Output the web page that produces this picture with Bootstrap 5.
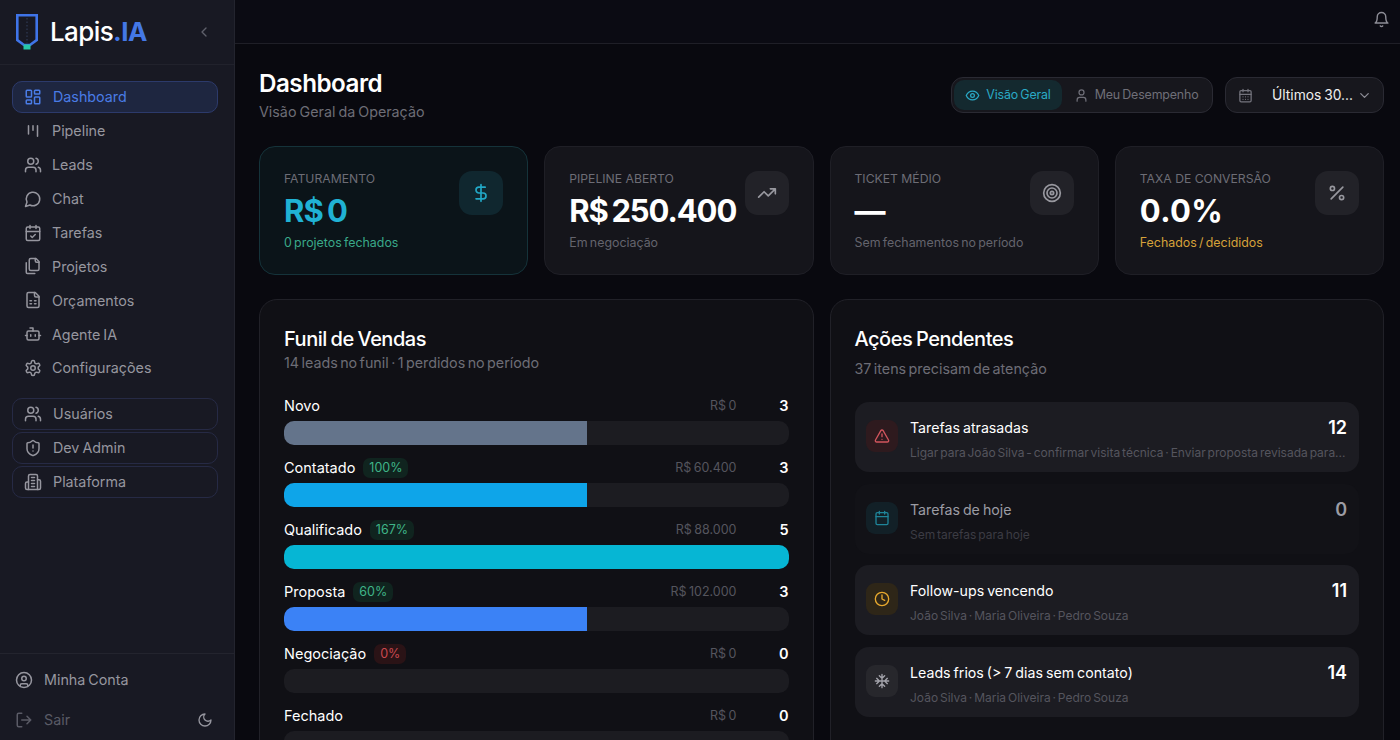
<!DOCTYPE html>
<html lang="pt-BR">
<head>
  <meta charset="UTF-8">
  <title>Lapis.IA - Dashboard</title>
  <link href="https://cdn.jsdelivr.net/npm/bootstrap@5.3.0/dist/css/bootstrap.min.css" rel="stylesheet">
  <style>
    html, body { height: 100%; }
    body { background: #09090f; color: #fff; font-family: "Inter", "Noto Sans", sans-serif; overflow: hidden; word-spacing: -1px; }
    svg.ico { width: 18px; height: 18px; fill: none; stroke: currentColor; stroke-width: 2; stroke-linecap: round; stroke-linejoin: round; flex: none; }
    .app-shell { height: 740px; }

    /* sidebar */
    .side { width: 235px; background: #181923; border-right: 1px solid #23242e; flex: none; }
    .side-logo { height: 65px; padding: 0 16px; border-bottom: 1px solid #21222c; }
    .logo-mark { width: 22px; height: 36px; flex: none; }
    .logo-text { font-size: 26px; font-weight: 500; letter-spacing: -.6px; line-height: 1; margin-left: 12px; }
    .logo-text b { color: #4478e6; font-weight: 700; }
    .side-collapse { width: 16px !important; height: 16px !important; color: #5f606b; margin-left: auto; margin-right: 6px; }
    .side-nav { padding: 16px 16px 0 12px; }
    .nav-entry { height: 32px; padding: 0 12px; gap: 10px; color: #96969f; font-size: 14.3px; text-decoration: none; border-radius: 10px; margin-bottom: 1.9px; }
    .nav-entry.active-entry { background: #1e2640; border: 1px solid #2c3a6b; color: #4a7ce6; padding: 0 11px; gap: 11px; }
    .nav-entry.framed { border: 1px solid #262a45; padding: 0 11px; gap: 11px; }
    .nav-gap { height: 12px; }
    .side-foot { border-top: 1px solid #23242e; padding: 6px 15px 0; height: 87px; }
    .foot-entry { height: 40px; gap: 11px; color: #96969f; font-size: 14.3px; }
    .foot-entry.dim { color: #5a5b66; }
    .moon-ico { width: 16px !important; height: 16px !important; color: #96969f; margin-left: auto; margin-right: 6px; }

    /* top */
    .top-strip { height: 44px; background: #0b0b13; border-bottom: 1px solid #1f1f27; padding: 0 10px 5px 0; color: #8d8d96; }
    .top-strip svg.ico { width: 17px; height: 17px; }
    .page-body { padding: 24px 16px 0 24px; min-width: 0; }
    .page-head { margin-bottom: 22px; }
    .page-title { font-size: 24.2px; font-weight: 600; letter-spacing: -.5px; line-height: 32px; margin: 0; }
    .page-sub { font-size: 14.3px; color: #6d6d76; line-height: 24px; }
    .head-tools { gap: 12px; margin-top: 9px; }
    .seg-box { height: 36px; background: #17171d; border: 1px solid #2a2a33; border-radius: 12px; padding: 2px; font-size: 12.4px; letter-spacing: -.15px; }
    .seg-item { height: 30px; padding: 0 11.5px; gap: 6px; border-radius: 10px; color: #6f6f78; }
    .seg-item.on { background: #14292f; color: #2aa9c6; }
    .seg-item svg.ico { width: 15px; height: 15px; }
    .range-box { height: 36px; width: 159px; background: #17171d; border: 1px solid #2a2a33; border-radius: 12px; padding: 0 11px 0 12px; font-size: 13.8px; color: #eee; }
    .range-box svg.ico { width: 15px; height: 15px; }
    .range-cal { color: #74747d; }
    .range-down { color: #8d8d96; }

    /* stat cards */
    .stat-card { --bs-card-bg: #15151b; --bs-card-border-color: #1f1f26; --bs-card-border-radius: 16px; --bs-card-inner-border-radius: 15px; height: 129px; }
    .stat-card.teal { --bs-card-bg: #0b1419; --bs-card-border-color: #15333a; }
    .stat-inner { padding: 22px 24px 0; position: relative; }
    .stat-label { font-size: 12.2px; color: #6d6d76; line-height: 20px; word-spacing: 0; }
    .stat-val { font-size: 31px; font-weight: 700; line-height: 42px; letter-spacing: -1.1px; word-spacing: -2.5px; margin-top: 1px; white-space: nowrap; }
    .stat-val.cyan { color: #20b2d4; letter-spacing: -.8px; }
    .stat-val.pct-val { letter-spacing: .4px; }
    .stat-sub { font-size: 12.4px; color: #64646d; line-height: 20px; margin-top: 1px; word-spacing: -1.2px; }
    .stat-sub.good { color: #3aa98a; }
    .stat-sub.warn { color: #d6a23a; }
    .stat-ico { position: absolute; top: 24px; right: 24px; width: 44px; height: 44px; border-radius: 13px; background: #222228; color: #98989f; }
    .teal .stat-ico { background: #10272f; color: #22a8c6; }
    .stat-ico svg.ico { width: 20px; height: 20px; }

    /* panels */
    .panel-card { --bs-card-bg: #101015; --bs-card-border-color: #212128; --bs-card-border-radius: 18px; height: 480px; padding: 25px 24px 0; }
    .panel-title { font-size: 20px; font-weight: 500; letter-spacing: -.5px; line-height: 28px; margin: 0; }
    .panel-sub { font-size: 14.3px; color: #6d6d76; line-height: 20px; word-spacing: -1.6px; }
    .panel-sub.spaced { margin-top: 6px; }
    .funnel-intro { margin-bottom: 21px; }

    /* funnel */
    .fun-head { height: 24px; margin-bottom: 3px; font-size: 14.5px; flex: none; }
    .pct-tag { font-size: 12.5px; font-weight: 400; padding: 0 6px; line-height: 20px; border-radius: 7px; margin-left: 8px; background: #10241f; color: #3fb488; }
    .pct-tag.bad { background: #2a1316; color: #c9484f; }
    .fun-money { margin-left: auto; width: 120px; text-align: right; font-size: 12.5px; color: #55555e; }
    .fun-count { width: 52px; text-align: right; font-weight: 600; }
    .fun-track { --bs-progress-height: 24px; --bs-progress-bg: #1c1c21; --bs-progress-border-radius: 10px; margin-bottom: 11px; flex: none; }

    /* actions */
    .act-list { margin-top: 23px; gap: 11.7px; }
    .act-row { background: #1c1c22; border-radius: 14px; padding: 14px 12px 11px 11.5px; gap: 12px; }
    .act-row.idle { background: #121217; }
    .act-ico { width: 32px; height: 32px; border-radius: 9px; margin-top: 4px; flex: none; background: #27272c; color: #a3a3ab; }
    .act-ico svg.ico { width: 16px; height: 16px; }
    .act-ico.red { background: #2e1a1e; color: #d1555d; }
    .act-ico.blue { background: #122027; color: #1f8499; }
    .act-ico.amber { background: #2e2618; color: #e8a92e; }
    .act-title { font-size: 14.2px; line-height: 24px; margin-bottom: 4px; }
    .act-title.muted-title { color: #9c9ca4; }
    .act-num { font-size: 18px; font-weight: 600; }
    .act-num.muted-title { color: #9c9ca4; }
    .act-note { font-size: 12px; color: #55555e; line-height: 17px; word-spacing: -1.5px; white-space: nowrap; }
    .act-note.faint { color: #3c3c44; }
  </style>
</head>
<body>
  <!-- icons -->
  <svg width="0" height="0" class="position-absolute">
    <symbol id="i-dash" viewBox="0 0 24 24"><rect x="3" y="3" width="7" height="9" rx="1"/><rect x="14" y="3" width="7" height="5" rx="1"/><rect x="14" y="12" width="7" height="9" rx="1"/><rect x="3" y="16" width="7" height="5" rx="1"/></symbol>
    <symbol id="i-kanban" viewBox="0 0 24 24"><path d="M6 5v11M12 5v6M18 5v14"/></symbol>
    <symbol id="i-users" viewBox="0 0 24 24"><path d="M16 21v-2a4 4 0 0 0-4-4H6a4 4 0 0 0-4 4v2"/><circle cx="9" cy="7" r="4"/><path d="M22 21v-2a4 4 0 0 0-3-3.87M16 3.13a4 4 0 0 1 0 7.75"/></symbol>
    <symbol id="i-chat" viewBox="0 0 24 24"><path d="M7.9 20A9 9 0 1 0 4 16.1L2 22Z"/></symbol>
    <symbol id="i-calcheck" viewBox="0 0 24 24"><path d="M8 2v4M16 2v4"/><rect x="3" y="4" width="18" height="18" rx="2"/><path d="M3 10h18M9 16l2 2 4-4"/></symbol>
    <symbol id="i-files" viewBox="0 0 24 24"><path d="M20 7h-3a2 2 0 0 1-2-2V2"/><path d="M9 18a2 2 0 0 1-2-2V4a2 2 0 0 1 2-2h7l4 4v10a2 2 0 0 1-2 2Z"/><path d="M3 7.6v12.8A1.6 1.6 0 0 0 4.6 22h9.8"/></symbol>
    <symbol id="i-sheet" viewBox="0 0 24 24"><path d="M15 2H6a2 2 0 0 0-2 2v16a2 2 0 0 0 2 2h12a2 2 0 0 0 2-2V7Z"/><path d="M14 2v4a2 2 0 0 0 2 2h4M8 13h2M14 13h2M8 17h2M14 17h2"/></symbol>
    <symbol id="i-bot" viewBox="0 0 24 24"><path d="M12 8V4H8"/><rect x="4" y="8" width="16" height="12" rx="2"/><path d="M2 14h2M20 14h2M15 13v2M9 13v2"/></symbol>
    <symbol id="i-gear" viewBox="0 0 24 24"><path d="M12.22 2h-.44a2 2 0 0 0-2 2v.18a2 2 0 0 1-1 1.73l-.43.25a2 2 0 0 1-2 0l-.15-.08a2 2 0 0 0-2.73.73l-.22.38a2 2 0 0 0 .73 2.73l.15.1a2 2 0 0 1 1 1.72v.51a2 2 0 0 1-1 1.74l-.15.09a2 2 0 0 0-.73 2.73l.22.38a2 2 0 0 0 2.73.73l.15-.08a2 2 0 0 1 2 0l.43.25a2 2 0 0 1 1 1.73V20a2 2 0 0 0 2 2h.44a2 2 0 0 0 2-2v-.18a2 2 0 0 1 1-1.73l.43-.25a2 2 0 0 1 2 0l.15.08a2 2 0 0 0 2.73-.73l.22-.39a2 2 0 0 0-.73-2.73l-.15-.08a2 2 0 0 1-1-1.74v-.5a2 2 0 0 1 1-1.74l.15-.09a2 2 0 0 0 .73-2.73l-.22-.38a2 2 0 0 0-2.73-.73l-.15.08a2 2 0 0 1-2 0l-.43-.25a2 2 0 0 1-1-1.73V4a2 2 0 0 0-2-2z"/><circle cx="12" cy="12" r="3"/></symbol>
    <symbol id="i-shield" viewBox="0 0 24 24"><path d="M20 13c0 5-3.5 7.5-7.66 8.95a1 1 0 0 1-.67-.01C7.5 20.5 4 18 4 13V6a1 1 0 0 1 1-1c2 0 4.5-1.2 6.24-2.72a1.17 1.17 0 0 1 1.52 0C14.51 3.81 17 5 19 5a1 1 0 0 1 1 1z"/><path d="M12 8v4M12 16h.01"/></symbol>
    <symbol id="i-build" viewBox="0 0 24 24"><path d="M6 22V4a2 2 0 0 1 2-2h8a2 2 0 0 1 2 2v18Z"/><path d="M6 12H4a2 2 0 0 0-2 2v6a2 2 0 0 0 2 2h2M18 9h2a2 2 0 0 1 2 2v9a2 2 0 0 1-2 2h-2M10 6h4M10 10h4M10 14h4M10 18h4"/></symbol>
    <symbol id="i-account" viewBox="0 0 24 24"><circle cx="12" cy="12" r="10"/><circle cx="12" cy="10" r="3"/><path d="M7 20.662V19a2 2 0 0 1 2-2h6a2 2 0 0 1 2 2v1.662"/></symbol>
    <symbol id="i-out" viewBox="0 0 24 24"><path d="M9 21H5a2 2 0 0 1-2-2V5a2 2 0 0 1 2-2h4M16 17l5-5-5-5M21 12H9"/></symbol>
    <symbol id="i-moon" viewBox="0 0 24 24"><path d="M12 3a6 6 0 0 0 9 9 9 9 0 1 1-9-9Z"/></symbol>
    <symbol id="i-bell" viewBox="0 0 24 24"><path d="M6 8a6 6 0 0 1 12 0c0 7 3 9 3 9H3s3-2 3-9M10.3 21a1.94 1.94 0 0 0 3.4 0"/></symbol>
    <symbol id="i-eye" viewBox="0 0 24 24"><path d="M2 12s3-7 10-7 10 7 10 7-3 7-10 7-10-7-10-7Z"/><circle cx="12" cy="12" r="3"/></symbol>
    <symbol id="i-user" viewBox="0 0 24 24"><path d="M19 21v-2a4 4 0 0 0-4-4H9a4 4 0 0 0-4 4v2"/><circle cx="12" cy="7" r="4"/></symbol>
    <symbol id="i-caldays" viewBox="0 0 24 24"><path d="M8 2v4M16 2v4"/><rect x="3" y="4" width="18" height="18" rx="2"/><path d="M3 10h18M8 14h.01M12 14h.01M16 14h.01M8 18h.01M12 18h.01M16 18h.01"/></symbol>
    <symbol id="i-cal" viewBox="0 0 24 24"><path d="M8 2v4M16 2v4"/><rect x="3" y="4" width="18" height="18" rx="2"/><path d="M3 10h18"/></symbol>
    <symbol id="i-down" viewBox="0 0 24 24"><path d="m6 9 6 6 6-6"/></symbol>
    <symbol id="i-left" viewBox="0 0 24 24"><path d="m15 18-6-6 6-6"/></symbol>
    <symbol id="i-dollar" viewBox="0 0 24 24"><path d="M12 2v20M17 5H9.5a3.5 3.5 0 0 0 0 7h5a3.5 3.5 0 0 1 0 7H6"/></symbol>
    <symbol id="i-trend" viewBox="0 0 24 24"><path d="M22 7l-8.5 8.5-5-5L2 17M16 7h6v6"/></symbol>
    <symbol id="i-target" viewBox="0 0 24 24"><circle cx="12" cy="12" r="10"/><circle cx="12" cy="12" r="6"/><circle cx="12" cy="12" r="2"/></symbol>
    <symbol id="i-pct" viewBox="0 0 24 24"><path d="M19 5 5 19"/><circle cx="6.5" cy="6.5" r="2.5"/><circle cx="17.5" cy="17.5" r="2.5"/></symbol>
    <symbol id="i-warn" viewBox="0 0 24 24"><path d="m21.73 18-8-14a2 2 0 0 0-3.48 0l-8 14A2 2 0 0 0 4 21h16a2 2 0 0 0 1.73-3M12 9v4M12 17h.01"/></symbol>
    <symbol id="i-clock" viewBox="0 0 24 24"><circle cx="12" cy="12" r="10"/><path d="M12 6v6l4 2"/></symbol>
    <symbol id="i-snow" viewBox="0 0 24 24"><path d="M2 12h20M12 2v20M20 16l-4-4 4-4M4 8l4 4-4 4M16 4l-4 4-4-4M8 20l4-4 4 4"/></symbol>
  </svg>

  <div class="app-shell d-flex">
    <!-- Sidebar -->
    <aside class="side d-flex flex-column">
      <div class="side-logo d-flex align-items-center">
        <svg class="logo-mark" viewBox="0 0 22 36" fill="none">
          <path d="M1.3 1.3h19.4V26L14 31H8L1.3 26Z" stroke="#3f74e8" stroke-width="2.6"/>
          <path d="M11 4v25" stroke="#33415f" stroke-width="1" stroke-dasharray="1.5 2"/>
          <rect x="7.5" y="30.5" width="7" height="5" fill="#27c7a8"/>
        </svg>
        <span class="logo-text">Lapis<b>.IA</b></span>
        <svg class="ico side-collapse"><use href="#i-left"/></svg>
      </div>

      <nav class="side-nav flex-grow-1">
        <a class="nav-entry active-entry d-flex align-items-center" href="#"><svg class="ico"><use href="#i-dash"/></svg>Dashboard</a>
        <a class="nav-entry d-flex align-items-center" href="#"><svg class="ico"><use href="#i-kanban"/></svg>Pipeline</a>
        <a class="nav-entry d-flex align-items-center" href="#"><svg class="ico"><use href="#i-users"/></svg>Leads</a>
        <a class="nav-entry d-flex align-items-center" href="#"><svg class="ico"><use href="#i-chat"/></svg>Chat</a>
        <a class="nav-entry d-flex align-items-center" href="#"><svg class="ico"><use href="#i-calcheck"/></svg>Tarefas</a>
        <a class="nav-entry d-flex align-items-center" href="#"><svg class="ico"><use href="#i-files"/></svg>Projetos</a>
        <a class="nav-entry d-flex align-items-center" href="#"><svg class="ico"><use href="#i-sheet"/></svg>Orçamentos</a>
        <a class="nav-entry d-flex align-items-center" href="#"><svg class="ico"><use href="#i-bot"/></svg>Agente IA</a>
        <a class="nav-entry d-flex align-items-center" href="#"><svg class="ico"><use href="#i-gear"/></svg>Configurações</a>
        <div class="nav-gap"></div>
        <a class="nav-entry framed d-flex align-items-center" href="#"><svg class="ico"><use href="#i-users"/></svg>Usuários</a>
        <a class="nav-entry framed d-flex align-items-center" href="#"><svg class="ico"><use href="#i-shield"/></svg>Dev Admin</a>
        <a class="nav-entry framed d-flex align-items-center" href="#"><svg class="ico"><use href="#i-build"/></svg>Plataforma</a>
      </nav>

      <div class="side-foot">
        <div class="foot-entry d-flex align-items-center"><svg class="ico"><use href="#i-account"/></svg>Minha Conta</div>
        <div class="foot-entry dim d-flex align-items-center"><svg class="ico"><use href="#i-out"/></svg>Sair<svg class="ico moon-ico"><use href="#i-moon"/></svg></div>
      </div>
    </aside>

    <div class="flex-grow-1 d-flex flex-column overflow-hidden">
      <div class="top-strip d-flex align-items-center justify-content-end flex-shrink-0">
        <svg class="ico"><use href="#i-bell"/></svg>
      </div>

      <main class="page-body">
        <!-- Header -->
        <div class="page-head d-flex justify-content-between align-items-start">
          <div>
            <h1 class="page-title">Dashboard</h1>
            <div class="page-sub">Visão Geral da Operação</div>
          </div>
          <div class="head-tools d-flex">
            <div class="seg-box d-flex">
              <div class="seg-item on d-flex align-items-center"><svg class="ico"><use href="#i-eye"/></svg>Visão Geral</div>
              <div class="seg-item d-flex align-items-center"><svg class="ico"><use href="#i-user"/></svg>Meu Desempenho</div>
            </div>
            <div class="range-box d-flex align-items-center">
              <svg class="ico range-cal"><use href="#i-caldays"/></svg>
              <span class="ms-auto me-1">Últimos 30...</span>
              <svg class="ico range-down"><use href="#i-down"/></svg>
            </div>
          </div>
        </div>

        <!-- Stats -->
        <div class="row row-cols-4 g-3 mb-4">
          <div class="col">
            <div class="card stat-card teal"><div class="stat-inner">
              <div class="stat-label">FATURAMENTO</div>
              <div class="stat-val cyan">R$ 0</div>
              <div class="stat-sub good">0 projetos fechados</div>
              <div class="stat-ico d-flex align-items-center justify-content-center"><svg class="ico"><use href="#i-dollar"/></svg></div>
            </div></div>
          </div>
          <div class="col">
            <div class="card stat-card"><div class="stat-inner">
              <div class="stat-label">PIPELINE ABERTO</div>
              <div class="stat-val">R$ 250.400</div>
              <div class="stat-sub">Em negociação</div>
              <div class="stat-ico d-flex align-items-center justify-content-center"><svg class="ico"><use href="#i-trend"/></svg></div>
            </div></div>
          </div>
          <div class="col">
            <div class="card stat-card"><div class="stat-inner">
              <div class="stat-label">TICKET MÉDIO</div>
              <div class="stat-val">—</div>
              <div class="stat-sub">Sem fechamentos no período</div>
              <div class="stat-ico d-flex align-items-center justify-content-center"><svg class="ico"><use href="#i-target"/></svg></div>
            </div></div>
          </div>
          <div class="col">
            <div class="card stat-card"><div class="stat-inner">
              <div class="stat-label">TAXA DE CONVERSÃO</div>
              <div class="stat-val pct-val">0.0%</div>
              <div class="stat-sub warn">Fechados / decididos</div>
              <div class="stat-ico d-flex align-items-center justify-content-center"><svg class="ico"><use href="#i-pct"/></svg></div>
            </div></div>
          </div>
        </div>

        <!-- Panels -->
        <div class="row g-3">
          <div class="col-6">
            <div class="card panel-card">
              <h2 class="panel-title">Funil de Vendas</h2>
              <div class="panel-sub funnel-intro">14 leads no funil · 1 perdidos no período</div>

              <div class="fun-head d-flex align-items-center"><span>Novo</span><span class="fun-money">R$ 0</span><span class="fun-count">3</span></div>
              <div class="progress fun-track"><div class="progress-bar" style="width:60%;background:#64748b"></div></div>

              <div class="fun-head d-flex align-items-center"><span>Contatado</span><span class="pct-tag">100%</span><span class="fun-money">R$ 60.400</span><span class="fun-count">3</span></div>
              <div class="progress fun-track"><div class="progress-bar" style="width:60%;background:#0ea5e9"></div></div>

              <div class="fun-head d-flex align-items-center"><span>Qualificado</span><span class="pct-tag">167%</span><span class="fun-money">R$ 88.000</span><span class="fun-count">5</span></div>
              <div class="progress fun-track"><div class="progress-bar" style="width:100%;background:#06b6d4"></div></div>

              <div class="fun-head d-flex align-items-center"><span>Proposta</span><span class="pct-tag">60%</span><span class="fun-money">R$ 102.000</span><span class="fun-count">3</span></div>
              <div class="progress fun-track"><div class="progress-bar" style="width:60%;background:#3b82f6"></div></div>

              <div class="fun-head d-flex align-items-center"><span>Negociação</span><span class="pct-tag bad">0%</span><span class="fun-money">R$ 0</span><span class="fun-count">0</span></div>
              <div class="progress fun-track"><div class="progress-bar" style="width:0%"></div></div>

              <div class="fun-head d-flex align-items-center"><span>Fechado</span><span class="fun-money">R$ 0</span><span class="fun-count">0</span></div>
              <div class="progress fun-track"><div class="progress-bar" style="width:0%"></div></div>
            </div>
          </div>

          <div class="col-6">
            <div class="card panel-card">
              <h2 class="panel-title">Ações Pendentes</h2>
              <div class="panel-sub spaced">37 itens precisam de atenção</div>

              <div class="act-list d-flex flex-column">
                <div class="act-row d-flex">
                  <div class="act-ico red d-flex align-items-center justify-content-center"><svg class="ico"><use href="#i-warn"/></svg></div>
                  <div class="flex-grow-1">
                    <div class="d-flex justify-content-between align-items-center act-title"><span>Tarefas atrasadas</span><span class="act-num">12</span></div>
                    <div class="act-note">Ligar para João Silva - confirmar visita técnica · Enviar proposta revisada para...</div>
                  </div>
                </div>
                <div class="act-row idle d-flex">
                  <div class="act-ico blue d-flex align-items-center justify-content-center"><svg class="ico"><use href="#i-cal"/></svg></div>
                  <div class="flex-grow-1">
                    <div class="d-flex justify-content-between align-items-center act-title muted-title"><span>Tarefas de hoje</span><span class="act-num muted-title">0</span></div>
                    <div class="act-note faint">Sem tarefas para hoje</div>
                  </div>
                </div>
                <div class="act-row d-flex">
                  <div class="act-ico amber d-flex align-items-center justify-content-center"><svg class="ico"><use href="#i-clock"/></svg></div>
                  <div class="flex-grow-1">
                    <div class="d-flex justify-content-between align-items-center act-title"><span>Follow-ups vencendo</span><span class="act-num">11</span></div>
                    <div class="act-note">João Silva · Maria Oliveira · Pedro Souza</div>
                  </div>
                </div>
                <div class="act-row d-flex">
                  <div class="act-ico d-flex align-items-center justify-content-center"><svg class="ico"><use href="#i-snow"/></svg></div>
                  <div class="flex-grow-1">
                    <div class="d-flex justify-content-between align-items-center act-title"><span>Leads frios (&gt; 7 dias sem contato)</span><span class="act-num">14</span></div>
                    <div class="act-note">João Silva · Maria Oliveira · Pedro Souza</div>
                  </div>
                </div>
              </div>
            </div>
          </div>
        </div>
      </main>
    </div>
  </div>

  <script src="https://cdn.jsdelivr.net/npm/bootstrap@5.3.0/dist/js/bootstrap.bundle.min.js"></script>
</body>
</html>
